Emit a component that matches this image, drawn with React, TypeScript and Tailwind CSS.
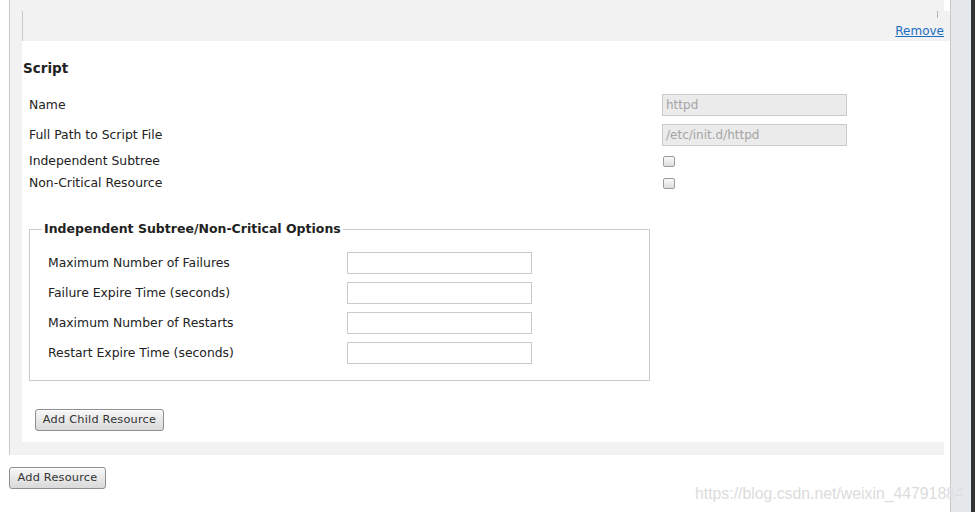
import React from "react";

const font = { fontFamily: '"DejaVu Sans", Verdana, sans-serif' };

function Button({ label, width }: { label: string; width: string }) {
  return (
    <button
      className={`${width} block h-[22px] rounded-[3px] border border-[#8e8e8e] bg-gradient-to-b from-[#f7f7f7] to-[#d9d9d9] text-[11.3px] leading-[20px] text-[#333] tracking-[0.02em] shadow-[inset_0_1px_0_#fff]`}
      style={font}
    >
      {label}
    </button>
  );
}

function Checkbox() {
  return (
    <span className="ml-px block h-[11px] w-[12px] rounded-[2px] border border-[#9c9c9c] bg-gradient-to-b from-[#fafafa] to-[#dedede]" />
  );
}

const optionRows = [
  "Maximum Number of Failures",
  "Failure Expire Time (seconds)",
  "Maximum Number of Restarts",
  "Restart Expire Time (seconds)",
];

export default function App() {
  return (
    <div className="relative flex h-[512px] w-[975px] overflow-hidden bg-white text-[#222]" style={font}>
      {/* main column */}
      <div className="w-[950px]">
        <div className="ml-[9px] w-[935px] border-l border-[#c9c9c9] bg-[#f2f2f2] pb-[13px] pl-[12px]">
          <div className="h-[11px]" />
          {/* resource header */}
          <div className="relative -mr-[6px] flex h-[30px] items-end justify-end border-l border-[#c9c9c9] bg-[#f2f2f2] pb-[3px] pr-[6px]">
            <span className="absolute right-[12px] top-0 h-[7px] w-px bg-[#b5b5b5]" />
            <a className="text-[12px] leading-[14px] text-[#1a6dc2] underline" href="#">
              Remove
            </a>
          </div>

          {/* script card */}
          <div className="bg-white pb-[11px] pt-[18px]">
            <h3 className="pl-px text-[13.5px] font-bold leading-[18px] text-[#222]">Script</h3>

            <div className="ml-[7px] mt-[13px] text-[12.4px]">
              <div className="flex h-[30px] items-center">
                <span className="w-[633px]">Name</span>
                <div className="flex h-[22px] w-[185px] items-center border border-[#c5cbd0] bg-[#ebebeb] pl-[3px] text-[12px] text-[#a5a5a5]">
                  httpd
                </div>
              </div>
              <div className="flex h-[30px] items-center">
                <span className="w-[633px]">Full Path to Script File</span>
                <div className="flex h-[22px] w-[185px] items-center border border-[#c5cbd0] bg-[#ebebeb] pl-[3px] text-[12px] text-[#a5a5a5]">
                  /etc/init.d/httpd
                </div>
              </div>
              <div className="flex h-[22px] items-center">
                <span className="w-[633px]">Independent Subtree</span>
                <Checkbox />
              </div>
              <div className="flex h-[22px] items-center">
                <span className="w-[633px]">Non-Critical Resource</span>
                <Checkbox />
              </div>
            </div>

            <fieldset className="ml-[7px] mt-[28px] w-[621px] border border-[#c8cbce] pb-[12px] pl-[18px] pt-[12px]">
              <legend className="-ml-[6px] px-[2px] text-[12.5px] font-bold leading-[14px] text-[#222]">
                Independent Subtree/Non-Critical Options
              </legend>
              {optionRows.map((label) => (
                <div key={label} className="flex h-[30px] items-center text-[12.4px]">
                  <span className="w-[299px]">{label}</span>
                  <div className="h-[22px] w-[185px] border border-[#c8cbce] bg-white" />
                </div>
              ))}
            </fieldset>

            <div className="ml-[13px] mt-[28px] flex">
              <Button label="Add Child Resource" width="w-[129px]" />
            </div>
          </div>
        </div>

        <div className="ml-[9px] mt-[12px] flex">
          <Button label="Add Resource" width="w-[97px]" />
        </div>
      </div>

      {/* scrollbar strip */}
      <div className="flex w-[25px] border-l border-[#c7cbcf] bg-[#e5e8eb]">
        <div className="ml-auto w-[4px] bg-[#333]" />
      </div>

      {/* watermark */}
      <span
        className="absolute left-[695px] top-[484px] text-[15.8px] leading-[19px] text-[#dcdcdc] [text-shadow:0_0_1px_#fff]"
        style={{ fontFamily: '"Liberation Sans", Arial, sans-serif' }}
      >
        https://blog.csdn.net/weixin_44791884
      </span>
    </div>
  );
}
